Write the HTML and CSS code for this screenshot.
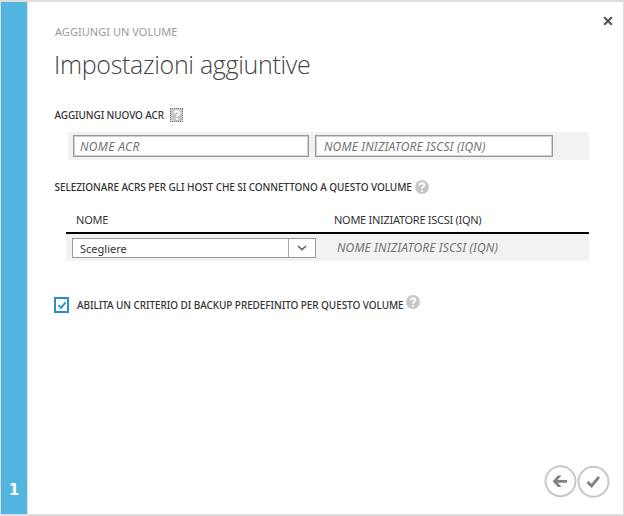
FILE: index.html
```html
<!DOCTYPE html>
<html lang="it">
<head>
<meta charset="utf-8">
<title>Aggiungi un volume</title>
<link rel="stylesheet" href="styles.css">
</head>
<body>
<div class="dialog">
  <aside class="steps"><span class="step">1</span></aside>
  <main class="content">
    <svg class="close" viewBox="0 0 10 10"><path d="M1.2 1.2 8.8 8.8M8.8 1.2 1.2 8.8"/></svg>
    <div class="crumb"><span>AGGIUNGI UN VOLUME</span></div>
    <h1 class="title"><span>Impostazioni aggiuntive</span></h1>
    <div class="label label-new"><span class="t-new">AGGIUNGI NUOVO ACR</span>
      <i class="focus"><svg class="help" viewBox="0 0 14 14"><circle cx="7" cy="7" r="6.9"/><path d="M4.6 5.2C4.7 2.6 9.4 2.6 9.4 5.2 9.4 6.8 7 6.8 7 8.7M7 9.9v1.8"/></svg></i>
    </div>
    <div class="row-new">
      <div class="input"><span class="t-acr">NOME ACR</span></div>
      <div class="input second"><span class="t-iqn">NOME INIZIATORE ISCSI (IQN)</span></div>
    </div>
    <div class="label label-select"><span class="t-sel">SELEZIONARE ACRS PER GLI HOST CHE SI CONNETTONO A QUESTO VOLUME</span>
      <svg class="help" viewBox="0 0 14 14"><circle cx="7" cy="7" r="6.9"/><path d="M4.6 5.2C4.7 2.6 9.4 2.6 9.4 5.2 9.4 6.8 7 6.8 7 8.7M7 9.9v1.8"/></svg>
    </div>
    <div class="table">
      <div class="thead"><span class="c1">NOME</span><span class="c2">NOME INIZIATORE ISCSI (IQN)</span></div>
      <div class="trow">
        <div class="select"><span class="value">Scegliere</span><span class="arrow"><svg viewBox="0 0 10 6"><path d="M1 1l4 3.6L9 1"/></svg></span></div>
        <span class="hint">NOME INIZIATORE ISCSI (IQN)</span>
      </div>
    </div>
    <div class="check-row">
      <span class="box"><svg viewBox="0 0 10 9"><path d="M1.4 4.2 4 6.9 8.6 1.4"/></svg></span>
      <span class="t-backup">ABILITA UN CRITERIO DI BACKUP PREDEFINITO PER QUESTO VOLUME</span>
      <svg class="help raised" viewBox="0 0 14 14"><circle cx="7" cy="7" r="6.9"/><path d="M4.6 5.2C4.7 2.6 9.4 2.6 9.4 5.2 9.4 6.8 7 6.8 7 8.7M7 9.9v1.8"/></svg>
    </div>
    <footer class="actions">
      <svg viewBox="0 0 33 33"><circle cx="16.5" cy="16.2" r="15"/><path d="M23 16.3H10.8"/><path class="head" d="M17.5 10.6h-3.6l-5.2 5.7 5.2 5.7h3.6l-5-5.7z"/></svg>
      <svg viewBox="0 0 33 33"><circle cx="16.5" cy="16.8" r="15"/><path d="M10.6 17 14.6 21 22 11.8"/></svg>
    </footer>
  </main>
</div>
</body>
</html>
```
FILE: styles.css
```css
* { box-sizing: border-box; }
body { margin: 0; font-family: "Noto Sans", "Open Sans", sans-serif; color: #333; background: #fff; }
.dialog { display: flex; width: 624px; height: 516px; border: 1px solid #dedede; border-top-width: 2px; border-bottom-width: 2px; }
.steps { width: 27px; flex: none; background: #52b5e0; border-right: 1px solid #d9e4e9; display: flex; flex-direction: column; justify-content: flex-end; align-items: center; padding-bottom: 14px; }
.step { color: #fff; font: 700 15px/20px "DejaVu Sans", sans-serif; }
.content { position: relative; flex: 1; padding-left: 26px; display: flex; flex-direction: column; white-space: nowrap; }
.close { position: absolute; right: 10px; top: 14px; width: 10px; height: 10px; fill: none; stroke: #555; stroke-width: 2.1; }
.crumb { margin-top: 22px; padding-left: 1px; height: 16px; font-size: 11px; line-height: 16px; letter-spacing: 0.04px; color: #999; }
.title { margin: 7px 0 0; height: 34px; font: 300 25px/34px "Open Sans", "Noto Sans", sans-serif; letter-spacing: -0.31px; color: #444; }
.label, .check-row { display: flex; align-items: center; font-size: 10px; font-weight: 500; }
.label { padding-left: 0.5px; }
.t-new { letter-spacing: -0.1px; }
.t-sel, .t-backup { letter-spacing: -0.075px; }
.label-new { margin-top: 26px; height: 16px; gap: 6px; }
.help { width: 14px; height: 14px; flex: none; fill: #c6c6c6; }
.help path { fill: none; stroke: #fff; stroke-width: 1.9; }
.focus { display: flex; width: 13px; height: 14px; overflow: hidden; background: #d2d2d2; outline: 1px dotted #777; outline-offset: -1px; justify-content: center; }
.row-new { display: flex; gap: 7px; margin: 9px 0 0 14px; width: 521px; height: 28px; padding: 3px 5px; background: #f2f2f2; }
.input { width: 236px; height: 22px; border: 1px solid #999; box-shadow: inset 0 0 0 1px #d0d0d0; background: #fff; padding-left: 6px; font-size: 12px; line-height: 21px; font-style: italic; color: #737373; }
.t-acr { letter-spacing: 0.35px; }
.t-iqn { letter-spacing: 0.14px; }
.second { width: 238px; margin-left: -1px; padding-left: 8px; }
.label-select { margin-top: 19px; height: 16px; gap: 3px; }
.table { margin: 15px 0 0 12px; width: 523px; }
.thead { display: flex; height: 24px; border-bottom: 2px solid #000; font-size: 11px; line-height: 19px; }
.c1 { width: 268px; padding-left: 10px; flex: none; letter-spacing: -0.2px; }
.c2 { letter-spacing: -0.28px; }
.trow { display: flex; height: 27px; padding: 4px 6px 2px; background: #f2f2f2; }
.select { width: 244px; height: 20px; border: 1px solid #999; background: #fff; display: flex; font-size: 11px; line-height: 19px; }
.value { flex: 1; padding-left: 7px; }
.arrow { width: 27px; border-left: 1px solid #aaa; display: flex; align-items: center; justify-content: center; }
.arrow svg { width: 10px; height: 6px; fill: none; stroke: #666; stroke-width: 1.6; }
.hint { margin-left: 21px; font-size: 12px; line-height: 20px; letter-spacing: 0.12px; font-style: italic; color: #737373; }
.check-row { margin-top: 35px; height: 17px; }
.box { width: 15px; height: 16px; margin-top: 1px; border: 2px solid #278fcb; display: flex; align-items: center; justify-content: center; margin-right: 8px; flex: none; }
.box svg { width: 10px; height: 9px; fill: none; stroke: #278fcb; stroke-width: 1.8; }
.raised { margin: -5px 0 0 2px; }
.actions { margin-top: auto; align-self: flex-end; display: flex; gap: 0; margin-right: 13px; margin-bottom: 16px; }
.actions svg { width: 33px; height: 33px; fill: none; stroke: #808080; stroke-width: 2.8; }
.actions circle { stroke: #c8c8c8; stroke-width: 2; }
.actions .head { fill: #808080; stroke: none; }
```
